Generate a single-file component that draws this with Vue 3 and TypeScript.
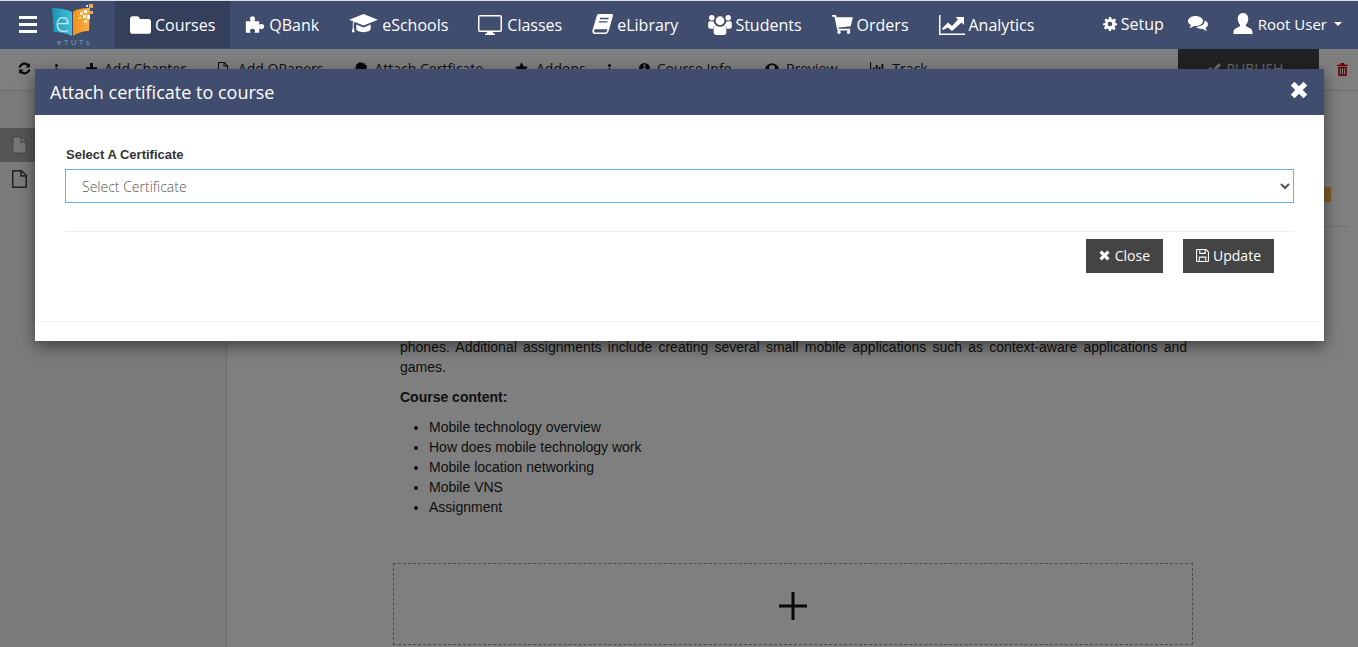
<script setup lang="ts">
interface Icon { vb: string; w: number; h: number; d: string }
const I: Record<string, Icon> = {
  folder: { vb: '0 0 24 20', w: 21, h: 18, d: 'M0 3a3 3 0 0 1 3-3h5a3 3 0 0 1 3 3h10a3 3 0 0 1 3 3v11a3 3 0 0 1-3 3H3a3 3 0 0 1-3-3z' },
  puzzle: { vb: '0 0 24 24', w: 20, h: 21, d: 'M1 8h5c1 0 .8-1 .2-1.6C5.5 5.6 5.8 2 9 2s3.5 3.6 2.8 4.4C11.2 7 11 8 12 8h5v3.500c0 1 1 .8 1.600.2.800-.7 4.400-.4 4.400 2.800s-3.600 3.500-4.400 2.800c-.6-.6-1.600-.8-1.600.2V22h-5c-1 0-.8-1-.2-1.600.7-.8.4-3.400-2.800-3.400s-3.500 2.600-2.800 3.400C6.800 21 7 22 6 22H1z' },
  cap: { vb: '0 0 30 24', w: 29, h: 23, d: 'M15 1 30 7 15 13 6 9.400 4.800 10.800V15l1 5H2.800l1-5v-4.800l.8-1.400L0 7zM7.500 12l7.500 3 7.500-3v4.500c0 2-3.400 3.500-7.500 3.500s-7.500-1.500-7.500-3.500z' },
  desktop: { vb: '0 0 24 20', w: 24, h: 20, d: 'M2 0h20a2 2 0 0 1 2 2v13a2 2 0 0 1-2 2h-7v1.500h2V20H7v-1.500h2V17H2a2 2 0 0 1-2-2V2a2 2 0 0 1 2-2zm0 1.500a.5.5 0 0 0-.5.5v13a.5.5 0 0 0 .5.5h20a.5.5 0 0 0 .5-.5V2a.5.5 0 0 0-.5-.5z' },
  book: { vb: '0 0 22 22', w: 21, h: 21, d: 'M7 0h14c1 0 1.200 1 1 1.600l-4.500 16c-.4 1.400-1.500 3.400-3.500 3.400H3.500C1 21 0 19 .5 17L5 2C5.300 1 6 0 7 0zm1.500 4-.4 1.500h9l.4-1.500zM7.500 7.500 7 9h9l.4-1.500zM3.500 16c-1.500 0-1.800 3.500 0 3.500H14c1 0 1.500-1 1.800-2l.2-1.500z' },
  users: { vb: '0 0 26 22', w: 24, h: 20, d: 'M4 0a3 3 0 1 1 0 6 3 3 0 0 1 0-6zm18 0a3 3 0 1 1 0 6 3 3 0 0 1 0-6zM13 1.500a4.800 4.800 0 1 1 0 9.600 4.800 4.800 0 0 1 0-9.600zM0 9.500c0-2 1-3 2.500-3 1.200.8 2.300.8 3.500.4.300 2 1.200 3.400 2.500 4.200C7 12 5.800 13.500 5.600 15H2c-1 0-2-.6-2-2zm26 0c0-2-1-3-2.500-3-1.200.8-2.300.8-3.500.4-.3 2-1.200 3.400-2.500 4.200 1.500.9 2.700 2.400 2.900 3.900H24c1 0 2-.6 2-2zM8.500 11.500c2.800 2 6.200 2 9 0 1.800.4 2.500 2.500 2.500 5v2.500c0 2-1.500 3-3 3H9c-1.500 0-3-1-3-3v-2.500c0-2.500.7-4.600 2.500-5z' },
  cart: { vb: '0 0 24 22', w: 21, h: 19, d: 'M0 0h4.500l.7 2.500H24l-2.500 10.500-14.200 1.500.4 1.500H21v2H6L2.800 2H0zM8 18a2 2 0 1 1 0 4 2 2 0 0 1 0-4zm11 0a2 2 0 1 1 0 4 2 2 0 0 1 0-4z' },
  chart: { vb: '0 0 26 20', w: 26, h: 20, d: 'M0 0h1.500v18.500H26V20H0zM4 15l-1-1.500 6-6 4 3.500 6-6.500L16.500 2H25v8l-2.500-2.500L13 16l-4-3.500z' },
  gear: { vb: '0 0 24 24', w: 14, h: 14, d: 'M10 0h4l.6 3.400 2.200.9L19.700 2.400l2.800 2.800-1.900 2.900.9 2.200L24 11v3l-3.400.8-.9 2.100 1.900 2.900-2.800 2.800-2.900-1.900-2.100.9L14 24h-4l-.7-3.400-2.100-.9-2.900 1.900-2.800-2.800 1.900-2.900-.9-2.100L0 14v-3l3.500-.9.900-2.200-1.900-2.700 2.800-2.800 2.900 1.900 2.100-.9zm2 8a4 4 0 1 0 0 8 4 4 0 0 0 0-8z' },
  chat: { vb: '0 0 24 20', w: 20, h: 17, d: 'M9 1c5 0 9 2.700 9 6s-4 6-9 6l-2-.1C5.500 14 3.500 15 1.500 15.200 2.500 14 3.300 13 3.500 11.800 1.300 10.700 0 9 0 7c0-3.300 4-6 9-6zM20 6.500c2.500 1 4 2.700 4 4.500 0 1.800-1.200 3.400-3 4.400.2 1.200 1 2.300 2 3.400-2-.2-4-1.300-5.500-2.400-3 .3-6.500-.5-8-2.400 5.500 0 11-2.500 10.500-7.500z' },
  user: { vb: '0 0 20 22', w: 20, h: 21, d: 'M10 0c3.300 0 5.500 2.700 5.500 6 0 2.500-.9 4.800-2.300 6-.5 1 0 2 1 2.500l4 2c1.300.7 1.800 2.500 1.800 5.500H0c0-3 .5-4.800 1.800-5.500l4-2c1-.5 1.500-1.500 1-2.500C5.400 10.800 4.500 8.500 4.500 6 4.500 2.700 6.700 0 10 0z' },
  refresh: { vb: '0 0 24 24', w: 13, h: 13, d: 'M12 1c3 0 5.700 1.200 7.700 3.100L22 2v8h-8l2.700-2.700C15.600 6.100 13.900 5.300 12 5.300 8.800 5.300 6.200 7.400 5.300 10.300L1 10C2.200 4.800 6.700 1 12 1zM2 14h8l-2.700 2.700c1.100 1.200 2.800 2 4.700 2 3.200 0 5.800-2.100 6.700-5L23 14c-1.200 5.200-5.700 9-11 9-3 0-5.700-1.200-7.700-3.100L2 22z' },
  dots: { vb: '0 0 3 11', w: 3, h: 11, d: 'M1.500 0a1.500 1.500 0 1 1 0 3 1.500 1.500 0 0 1 0-3zM1.500 4a1.500 1.500 0 1 1 0 3 1.500 1.500 0 0 1 0-3zM1.500 8a1.500 1.500 0 1 1 0 3 1.500 1.500 0 0 1 0-3z' },
  plus: { vb: '0 0 24 24', w: 11, h: 11, d: 'M9 0h6v9h9v6h-9v9H9v-9H0V9h9z' },
  file: { vb: '0 0 20 24', w: 10, h: 12, d: 'M1 0h12l7 7v16a1 1 0 0 1-1 1H1a1 1 0 0 1-1-1V1a1 1 0 0 1 1-1zm1 2v20h16V9h-7V2zm11 .5V7h4.500z' },
  cert: { vb: '0 0 24 24', w: 12, h: 12, d: 'M12 0l3 2.500 3.800-.7 1.300 3.600 3.600 1.300-.7 3.800L24 12l-2.500 3 .7 3.800-3.600 1.300-1.300 3.600-3.800-.7L12 24l-3-2.500-3.800.7-1.300-3.600-3.600-1.300.7-3.800L0 12l2.500-3-.7-3.800 3.600-1.300L6.700 .3 10 1.500z' },
  star: { vb: '0 0 24 24', w: 13, h: 13, d: 'M12 0l3.700 8 8.300 1-6.100 5.700L19.500 23 12 18.800 4.500 23l1.600-8.300L0 9l8.300-1z' },
  info: { vb: '0 0 24 24', w: 11, h: 11, d: 'M12 0a12 12 0 1 1 0 24 12 12 0 0 1 0-24zM10 3.500v4h4v-4zM8.500 10v2.500H10V18H8.500v2.500h7V18H14v-8z' },
  eye: { vb: '0 0 26 18', w: 14, h: 10, d: 'M13 0c6 0 10.500 4.500 13 9-2.500 4.500-7 9-13 9S2.500 13.500 0 9C2.500 4.500 7 0 13 0zm0 3.500a5.500 5.500 0 1 0 0 11 5.500 5.500 0 0 0 0-11z' },
  bars: { vb: '0 0 26 20', w: 15, h: 12, d: 'M0 0h2v18h24v2H0zM5 9h3v8H5zM10 5h3v12h-3zM15 8h3v9h-3zM20 3h3v14h-3z' },
  check: { vb: '0 0 24 20', w: 13, h: 11, d: 'M20 0l4 4L9 20 0 11l4-4 5 5z' },
  trash: { vb: '0 0 20 24', w: 11, h: 13, d: 'M7 0h6l1.500 3H20v2.500H0V3h5.500zM2 7h16v15a2 2 0 0 1-2 2H4a2 2 0 0 1-2-2zm3 2.500V21h2V9.500zm4 0V21h2V9.500zm4 0V21h2V9.500z' },
  times: { vb: '0 0 24 24', w: 11, h: 11, d: 'M6 1l6 6 6-6 5 5-6 6 6 6-5 5-6-6-6 6-5-5 6-6-6-6z' },
  save: { vb: '0 0 24 24', w: 13, h: 13, d: 'M2 0h17l5 5v17a2 2 0 0 1-2 2H2a2 2 0 0 1-2-2V2a2 2 0 0 1 2-2zm0 2v20h3v-8h14v8h3V6l-4-4v7H6V2zm6 0v5h8V2zM7 16v6h10v-6z' },
}
const navItems = [
  { icon: 'folder', label: 'Courses', active: true },
  { icon: 'puzzle', label: 'QBank' },
  { icon: 'cap', label: 'eSchools' },
  { icon: 'desktop', label: 'Classes' },
  { icon: 'book', label: 'eLibrary' },
  { icon: 'users', label: 'Students' },
  { icon: 'cart', label: 'Orders' },
  { icon: 'chart', label: 'Analytics' },
]
const tools = [
  { icon: 'plus', label: 'Add Chapter' },
  { icon: 'file', label: 'Add QPapers' },
  { icon: 'cert', label: 'Attach Certficate' },
  { icon: 'star', label: 'Addons' },
]
const tools2 = [
  { icon: 'info', label: 'Course Info' },
  { icon: 'eye', label: 'Preview' },
  { icon: 'bars', label: 'Track' },
]
const topics = ['Mobile technology overview', 'How does mobile technology work', 'Mobile location networking', 'Mobile VNS', 'Assignment']
</script>

<template>
  <div class="page">
    <nav class="nav">
      <div class="burger"><i></i><i></i><i></i></div>
      <div class="logo">
        <svg width="42" height="32" viewBox="0 0 42 32">
          <defs>
            <linearGradient id="lg-blue" x1="0" y1="0" x2="1" y2="0">
              <stop offset="0" stop-color="#1793b5" />
              <stop offset="1" stop-color="#45c0d8" />
            </linearGradient>
            <linearGradient id="lg-orange" x1="0" y1="0" x2="1" y2="0">
              <stop offset="0" stop-color="#f2921a" />
              <stop offset="1" stop-color="#f9b04a" />
            </linearGradient>
          </defs>
          <path d="M0 4c7 0 14 1 20 4v24C14 29 7 28 2 28z" fill="url(#lg-blue)" />
          <path d="M21 8c3-3 10-4 17-4l-1 23c-6 0-12 2-16 5z" fill="url(#lg-orange)" />
          <rect x="28" y="8" width="3" height="3" fill="#fde3bd" />
          <rect x="32" y="6" width="3" height="3" fill="#fff" />
          <rect x="27" y="13" width="2" height="2" fill="#fde3bd" />
          <rect x="31" y="11" width="3" height="3" fill="#fff" />
          <rect x="35" y="11" width="3" height="4" fill="#fff" />
          <rect x="32" y="16" width="3" height="3" fill="#fde3bd" />
          <rect x="34" y="1" width="2" height="2" fill="#ddd" />
          <rect x="37" y="0" width="4" height="4" fill="#e9a860" />
          <rect x="38" y="7" width="3" height="3" fill="#e9a860" />
        </svg>
        <span class="logo-e">e</span>
        <span class="logo-text">eTUTs</span>
      </div>
      <a v-for="n in navItems" :key="n.label" class="nav-item" :class="{ active: n.active }">
        <svg :class="'ic-' + n.icon" :width="I[n.icon].w" :height="I[n.icon].h" :viewBox="I[n.icon].vb"><path :d="I[n.icon].d" fill="currentColor" fill-rule="evenodd" /></svg>
        <span>{{ n.label }}</span>
      </a>
      <div class="nav-right">
        <a class="nav-r setup">
          <svg :width="I.gear.w" :height="I.gear.h" :viewBox="I.gear.vb"><path :d="I.gear.d" fill="currentColor" fill-rule="evenodd" /></svg>
          <span>Setup</span>
        </a>
        <a class="nav-r chat">
          <svg :width="I.chat.w" :height="I.chat.h" :viewBox="I.chat.vb"><path :d="I.chat.d" fill="currentColor" fill-rule="evenodd" /></svg>
        </a>
        <a class="nav-r user">
          <svg :width="I.user.w" :height="I.user.h" :viewBox="I.user.vb"><path :d="I.user.d" fill="currentColor" /></svg>
          <span>Root User</span>
          <b class="caret"></b>
        </a>
      </div>
    </nav>

    <div class="toolbar">
      <svg class="t-refresh" :width="I.refresh.w" :height="I.refresh.h" :viewBox="I.refresh.vb"><path :d="I.refresh.d" /></svg>
      <svg class="t-dots" :width="I.dots.w" :height="I.dots.h" :viewBox="I.dots.vb"><path :d="I.dots.d" /></svg>
      <a v-for="t in tools" :key="t.label" class="tool">
        <svg :class="'ic-' + t.icon" :width="I[t.icon].w" :height="I[t.icon].h" :viewBox="I[t.icon].vb"><path :d="I[t.icon].d" fill-rule="evenodd" /></svg>
        <span>{{ t.label }}</span>
      </a>
      <svg class="t-dots2" :width="I.dots.w" :height="I.dots.h" :viewBox="I.dots.vb"><path :d="I.dots.d" /></svg>
      <a v-for="t in tools2" :key="t.label" class="tool tool-b">
        <svg :width="I[t.icon].w" :height="I[t.icon].h" :viewBox="I[t.icon].vb"><path :d="I[t.icon].d" fill-rule="evenodd" /></svg>
        <span>{{ t.label }}</span>
      </a>
      <button class="publish">
        <svg :width="I.check.w" :height="I.check.h" :viewBox="I.check.vb"><path :d="I.check.d" /></svg>
        PUBLISH
      </button>
      <svg class="t-trash" :width="I.trash.w" :height="I.trash.h" :viewBox="I.trash.vb"><path :d="I.trash.d" fill-rule="evenodd" /></svg>
    </div>

    <div class="main">
      <aside class="side">
        <div class="side-row selected">
          <svg width="15" height="18" viewBox="0 0 20 24"><path d="M0 0h13l7 7v17H0z" class="page-fill" /><path :d="I.file.d" fill-rule="evenodd" /></svg>
        </div>
        <div class="side-row">
          <svg width="15" height="18" :viewBox="I.file.vb"><path :d="I.file.d" fill-rule="evenodd" /></svg>
        </div>
      </aside>
      <section class="content">
        <div class="head"><span class="badge"></span></div>
        <div class="column">
          <p class="desc">phones. Additional assignments include creating several small mobile applications such as context-aware applications and games.</p>
          <p class="subhead"><b>Course content:</b></p>
          <ul>
            <li v-for="t in topics" :key="t">{{ t }}</li>
          </ul>
          <div class="adder">
            <svg width="28" height="28" viewBox="0 0 28 28"><path d="M12.500 0h3v12.500H28v3H15.500V28h-3V15.500H0v-3h12.500z" /></svg>
          </div>
        </div>
      </section>
    </div>

    <div class="overlay"></div>

    <div class="modal">
      <header class="m-head">
        <h4>Attach certificate to course</h4>
        <svg class="m-x" width="18" height="18" viewBox="0 0 24 24"><path :d="I.times.d" fill="#fff" /></svg>
      </header>
      <div class="m-body">
        <label for="cert-select">Select A Certificate</label>
        <select id="cert-select" class="m-select">
          <option>Select Certificate</option>
        </select>
        <hr />
        <div class="m-actions">
          <button class="m-btn close">
            <svg :width="I.times.w" :height="I.times.h" :viewBox="I.times.vb"><path :d="I.times.d" fill="#fff" /></svg>
            Close
          </button>
          <button class="m-btn">
            <svg :width="I.save.w" :height="I.save.h" :viewBox="I.save.vb"><path :d="I.save.d" fill="#fff" fill-rule="evenodd" /></svg>
            Update
          </button>
        </div>
      </div>
      <div class="m-foot"></div>
    </div>
  </div>
</template>

<style>
html, body { margin: 0; height: 100%; overflow: hidden; background: #fff; }
</style>

<style scoped>
.page {
  position: relative;
  width: 1358px;
  height: 647px;
  overflow: hidden;
  font-family: "Open Sans", sans-serif;
  color: #333;
  background: #fff;
}
.nav {
  position: relative;
  z-index: 3;
  display: flex;
  align-items: stretch;
  height: 48px;
  box-sizing: content-box;
  padding-bottom: 1px;
  background: #404d6e;
  color: #fff;
  box-shadow: inset 0 1px 0 #dcdfe6;
  font-size: 16px;
}
.burger {
  display: flex;
  flex-direction: column;
  justify-content: center;
  gap: 4px;
  width: 18px;
  margin-left: 19px;
}
.burger i { display: block; height: 3px; background: #fff; }
.logo {
  position: relative;
  width: 42px;
  height: 44px;
  margin: 4px 21px 0 15px;
  flex: none;
}
.logo svg { display: block; }
.logo-e {
  position: absolute;
  left: 3px;
  top: 6px;
  font: 300 27px/24px "Open Sans", sans-serif;
  color: #c9e8f1;
}
.logo-text {
  position: absolute;
  left: 5px;
  top: 33px;
  font: 8px/9px "Open Sans", sans-serif;
  letter-spacing: 2.400px;
  color: #6aaab4;
}
.nav-item {
  display: flex;
  align-items: center;
  gap: 4px;
  padding: 0 15px;
  margin-top: 1px;
}
.nav-item.active { background: #343f5c; }
.ic-desktop { margin-right: 1px; }
.ic-users { margin-right: -1px; }
.nav-right {
  margin-left: auto;
  display: flex;
  align-items: center;
  padding-right: 16px;
}
.nav-r { display: flex; align-items: center; gap: 4px; margin-top: -1px; }
.setup { font-size: 16px; }
.chat { margin-left: 24px; }
.user { margin-left: 25px; gap: 5px; font-size: 15px; }
.caret {
  width: 0;
  height: 0;
  margin-left: 2px;
  border-left: 4px solid transparent;
  border-right: 4px solid transparent;
  border-top: 4px solid #fff;
}
.toolbar {
  display: flex;
  align-items: flex-start;
  height: 41px;
  border-bottom: 1px solid #ddd;
  background: #fff;
  font-size: 14px;
  color: #222;
  position: relative;
}
.toolbar svg { fill: #111; flex: none; }
.t-refresh { margin: 13px 0 0 18px; }
.t-dots { margin: 15px 0 0 24px; }
.t-dots2 { margin: 15px 0 0 22px; }
.tool {
  display: flex;
  align-items: center;
  gap: 7px;
  height: 38px;
  margin-left: 28px;
}
.tool + .tool { margin-left: 32px; }
.tool-b + .tool-b { margin-left: 33px; }
.ic-file { margin-right: 3px; }
.ic-star { margin-right: 1px; }
.publish {
  position: absolute;
  left: 1178px;
  top: 0;
  display: flex;
  align-items: center;
  justify-content: center;
  gap: 6px;
  width: 141px;
  height: 41px;
  padding: 0 6px 3px 0;
  border: 0;
  background: #444;
  color: #ddd;
  font: 14px "Open Sans", sans-serif;
}
.publish svg { fill: #ddd; }
.toolbar .t-trash { position: absolute; left: 1337px; top: 14px; fill: #c00; }
.main {
  display: grid;
  grid-template-columns: 227px 1fr;
  height: 560px;
}
.side {
  padding-top: 37px;
  background: #f6f6f6;
  border-right: 1px solid #ddd;
}
.side-row { display: flex; align-items: center; height: 34px; padding-left: 12px; }
.side-row.selected { background: #aaa; }
.side-row svg { fill: #444; }
.side-row.selected svg { fill: #999; }
.side-row.selected .page-fill { fill: #eee; }
.content { padding: 0 9px 0 0; font: 14px/20px "Liberation Sans", Arial, sans-serif; color: #222; }
.head {
  position: relative;
  height: 136px;
  border-bottom: 1px solid #e3e3e3;
  box-sizing: border-box;
}
.badge {
  position: absolute;
  right: 18px;
  top: 96px;
  width: 60px;
  height: 15px;
  background: #ffb950;
}
.column { width: 787px; margin-left: 173px; }
.desc { margin: 110px 0 0; text-align: justify; }
.subhead { margin: 10px 0 0; }
ul { margin: 10px 0 0; padding-left: 29px; }
li { line-height: 20px; }
.adder {
  display: flex;
  align-items: center;
  justify-content: center;
  width: 798px;
  height: 80px;
  box-sizing: content-box;
  margin: 46px 0 0 -7px;
  border: 1px dashed #999;
}
.adder svg { fill: #111; margin-top: 4px; }
.overlay {
  position: absolute;
  inset: 0;
  z-index: 1;
  background: rgba(0, 0, 0, 0.5);
}
.modal {
  position: absolute;
  z-index: 2;
  left: 35px;
  top: 69px;
  width: 1289px;
  height: 272px;
  background: #fff;
  box-shadow: 0 5px 15px rgba(0, 0, 0, 0.5);
  display: flex;
  flex-direction: column;
}
.m-head {
  display: flex;
  align-items: center;
  justify-content: space-between;
  height: 46px;
  flex: none;
  padding: 0 16px 0 15px;
  background: #404d6e;
  color: #fff;
}
.m-head h4 { margin: 0; font-size: 18px; font-weight: 400; }
.m-x { margin-top: -4px; }
.m-body { flex: 1; padding: 32px 30px 0; }
.m-body label {
  display: block;
  height: 22px;
  font: bold 13px/16px "Liberation Sans", Arial, sans-serif;
  margin-left: 1px;
  color: #333;
}
.m-select {
  display: block;
  width: 100%;
  height: 34px;
  box-sizing: border-box;
  padding: 0 12px;
  background: #fff;
  border: 1px solid #66afe9;
  border-radius: 0;
  outline: 0;
  font: 300 14px "Open Sans", sans-serif;
  color: #555;
}
hr { margin: 28px 0 0; border: 0; border-top: 1px solid #eee; }
.m-actions { display: flex; justify-content: flex-end; gap: 20px; padding: 7px 20px 0 0; }
.m-btn {
  display: flex;
  align-items: center;
  justify-content: center;
  gap: 4px;
  height: 34px;
  padding: 0 13px 2px;
  border: 0;
  background: #444;
  color: #fff;
  font: 14px "Open Sans", sans-serif;
}
.m-btn.close { gap: 5px; }
.m-foot { height: 19px; flex: none; border-top: 1px solid #f2f2f2; }
</style>
